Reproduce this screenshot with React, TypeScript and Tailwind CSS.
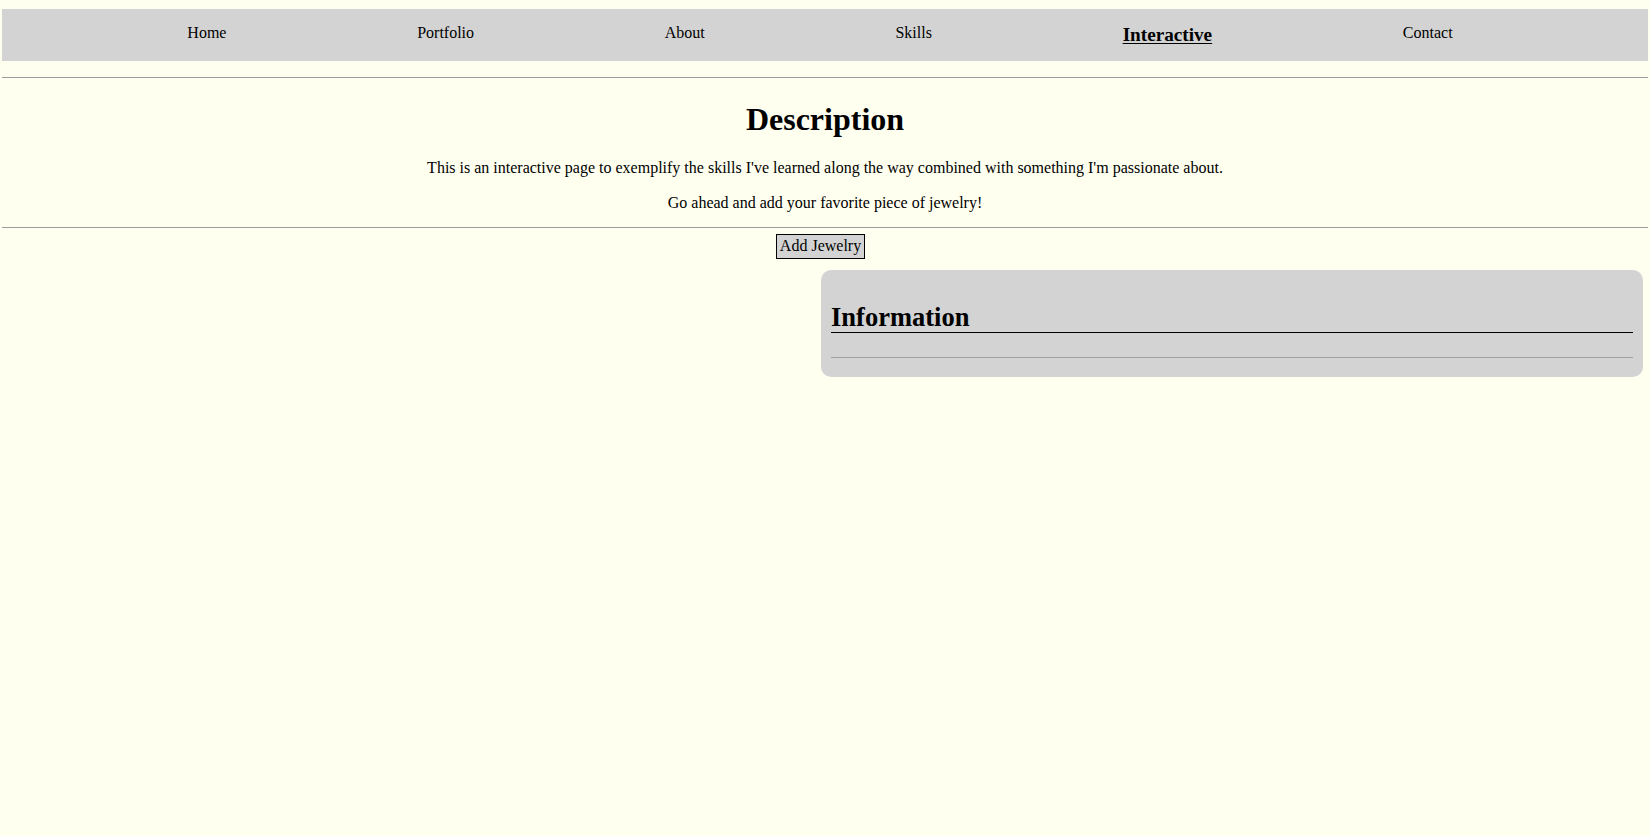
import React from "react";

export default function App() {
  const items = ["Home", "Portfolio", "About", "Skills", "Interactive", "Contact"];
  return (
    <div className="min-h-[836px] bg-[#fffff0] px-[2px] pt-[9px] font-['Liberation_Serif',serif] text-black">
      <nav className="h-[52px] bg-[#d3d3d3] pt-[15px]">
        <ul className="ml-[90px] mr-[100px] flex items-start justify-around">
          {items.map((it) =>
            it === "Interactive" ? (
              <li key={it} className="text-[19.2px] font-bold leading-[1.15] underline underline-offset-[2px]">
                {it}
              </li>
            ) : (
              <li key={it} className="text-[16px] leading-[1.15]">
                {it}
              </li>
            )
          )}
        </ul>
      </nav>
      <div className="mt-[16px] h-px bg-[#9d9d9d]" />
      <section className="text-center">
        <h1 className="mt-[23px] text-[32px] font-bold leading-[1.15]">Description</h1>
        <p className="mt-[21px] text-[16px] leading-[1.15]">
          This is an interactive page to exemplify the skills I've learned along the way combined with something I'm passionate about.
        </p>
        <p className="mt-[17px] text-[16px] leading-[1.15]">Go ahead and add your favorite piece of jewelry!</p>
      </section>
      <div className="mt-[14px] h-px bg-[#9d9d9d]" />
      <div className="mt-[6px] flex justify-center pr-[9px]">
        <button className="h-[25px] border border-black bg-[#d3d3d3] px-[3px] text-[16px] leading-[1.15] text-black">
          Add Jewelry
        </button>
      </div>
      <div className="mt-[11px] flex justify-end">
        <div className="mr-[5px] w-[822px] rounded-[10px] bg-[#d3d3d3] px-[10px] pb-[11px] pt-[10px]">
          <h2 className="mt-[22px] border-b border-black text-[26.5px] font-bold leading-[1.15]">Information</h2>
          <div className="mt-[24px] h-px bg-[#a0a0a0]" />
          <div className="h-[8px]" />
        </div>
      </div>
    </div>
  );
}
